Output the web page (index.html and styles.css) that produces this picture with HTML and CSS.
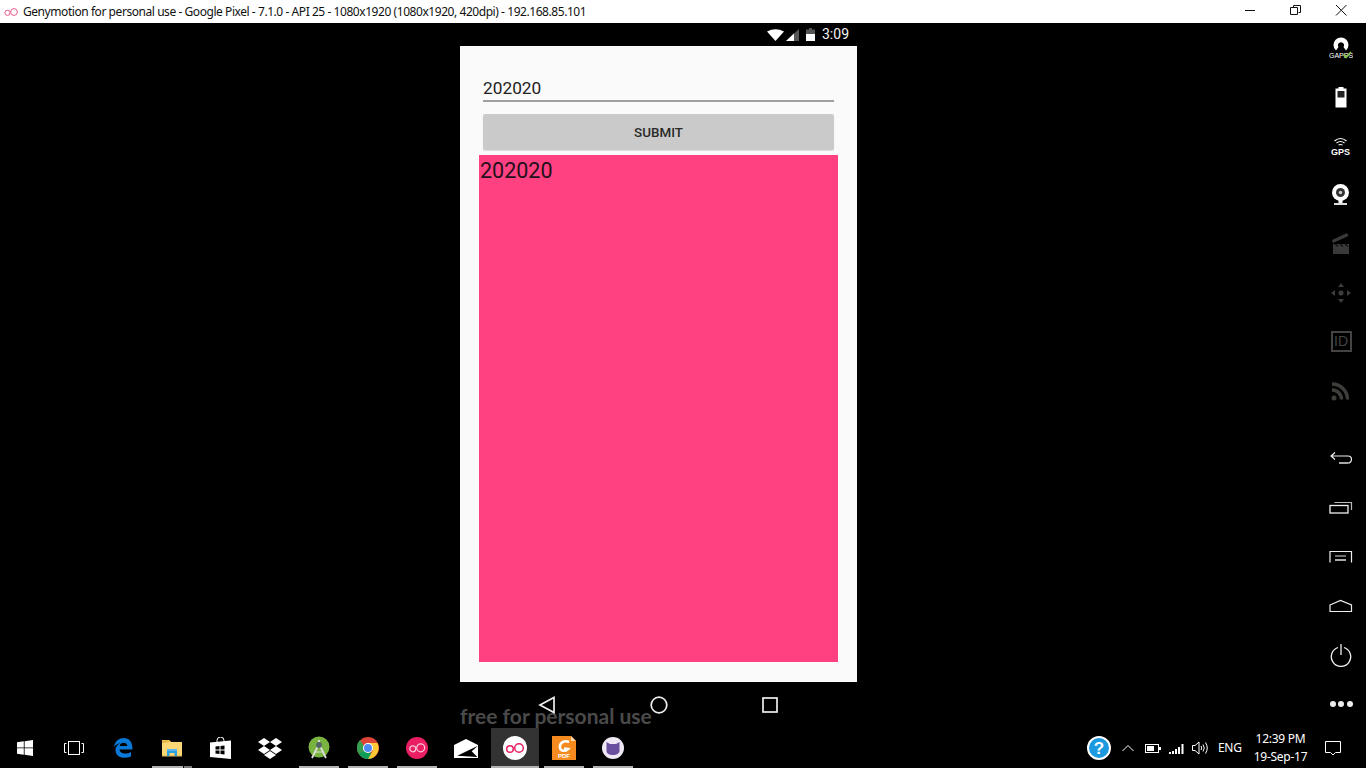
FILE: index.html
```html
<!DOCTYPE html>
<html lang="en">
<head>
<meta charset="utf-8">
<title>Genymotion</title>
<link rel="stylesheet" href="styles.css">
</head>
<body>
<div class="screen">
  <header class="titlebar">
    <svg class="title-logo" width="16" height="10" viewBox="0 0 16 10"><circle cx="4.500" cy="5.800" r="2.600" fill="none" stroke="#ef5a8c" stroke-width="1"/><circle cx="11" cy="5" r="3.400" fill="none" stroke="#ef5a8c" stroke-width="1"/></svg>
    <span class="title-text">Genymotion for personal use - Google Pixel - 7.1.0 - API 25 - 1080x1920 (1080x1920, 420dpi) - 192.168.85.101</span>
    <div class="win-controls">
      <svg width="46" height="23" viewBox="0 0 46 23"><path d="M19 10.500h10" stroke="#111" fill="none"/></svg>
      <svg width="46" height="23" viewBox="0 0 46 23"><path d="M21.500 7.500v-2h7v7h-2M18.500 7.500h7v7h-7z" stroke="#111" fill="none"/></svg>
      <svg width="46" height="23" viewBox="0 0 46 23"><path d="M18 5l10.500 10.500M28.500 5L18 15.500" stroke="#111" fill="none"/></svg>
    </div>
  </header>

  <main class="stage">
    <section class="device">
      <div class="statusbar">
        <svg width="17" height="12" viewBox="0 0 17 12"><path d="M0 2.500Q8.500 -2 17 2.500L8.500 12z" fill="#fff"/></svg>
        <svg class="st-signal" width="13" height="12" viewBox="0 0 13 12"><path d="M0 12L13 0v12z" fill="#555"/><path d="M0 12L8 4.600V12z" fill="#fff"/></svg>
        <svg class="st-batt" width="9" height="13" viewBox="0 0 9 13"><path d="M3 0h3v1.500h3V13H0V1.500h3z" fill="#555"/><path d="M0 6h9v7H0z" fill="#fff"/></svg>
        <span class="st-time">3:09</span>
      </div>
      <div class="app">
        <div class="field">202020</div>
        <button class="submit" type="button">SUBMIT</button>
        <div class="pink">202020</div>
      </div>
      <nav class="softkeys">
        <svg width="18" height="18" viewBox="0 0 18 18"><path d="M16 1.500v15L2 9z" fill="none" stroke="#eee" stroke-width="1.700"/></svg>
        <svg width="18" height="18" viewBox="0 0 18 18"><circle cx="9" cy="9" r="7.800" fill="none" stroke="#eee" stroke-width="1.700"/></svg>
        <svg width="16" height="16" viewBox="0 0 16 16"><rect x="1" y="1" width="14" height="14" fill="none" stroke="#eee" stroke-width="1.700"/></svg>
      </nav>
      <div class="watermark">free for personal use</div>
    </section>

    <aside class="sidebar">
      <div class="side-item"><svg width="24" height="24" viewBox="0 0 24 24"><path d="M7 14.500A7.500 7.500 0 1 1 17 14.500L14.500 11A3 3 0 1 0 9.500 11z" fill="#fff"/><text x="0" y="22" class="gapps">GAPPS</text><path d="M14.500 18.500l2.500 3 5-5.500" fill="none" stroke="#8bc34a" stroke-width="1.800"/></svg></div>
      <div class="side-item"><svg width="14" height="22" viewBox="0 0 14 22"><path d="M4.500 1h5v1.500h3V21.500H1.500V2.500h3z" fill="#fff"/><rect x="3.500" y="5" width="7" height="6.500" fill="#222"/></svg></div>
      <div class="side-item"><svg width="20" height="20" viewBox="0 0 20 20"><path d="M3.500 5Q9.500 0 15.500 5M5.500 7Q9.500 4 13.500 7M7.500 9Q9.500 8 11.500 9" fill="none" stroke="#fff" stroke-width="1.200"/><text x="9.500" y="18.500" class="gps">GPS</text></svg></div>
      <div class="side-item"><svg width="20" height="24" viewBox="0 0 20 24"><circle cx="9.500" cy="9.500" r="8.500" fill="#fff"/><circle cx="9.500" cy="9.500" r="4.500" fill="#333"/><circle cx="9.500" cy="9.500" r="1.700" fill="#ccc"/><rect x="7.500" y="17" width="4" height="3" fill="#fff"/><rect x="3" y="20" width="13" height="2" fill="#ddd"/></svg></div>
      <div class="side-item"><svg width="18" height="22" viewBox="0 0 18 22"><path d="M1 11h16v10H1z" fill="#3a3a3a"/><path d="M0 7L15 0l1.500 3L1 10z" fill="#3a3a3a"/><path d="M3 11l3 2.500M8 11l3 2.500M13 11l3 2.500" stroke="#111" stroke-width="1.400"/></svg></div>
      <div class="side-item"><svg width="22" height="22" viewBox="0 0 22 22" fill="#3d3d3d"><path d="M11 1l3 4H8zM11 21l-3-4h6zM1 11l4-3v6zM21 11l-4 3V8z"/><circle cx="11" cy="11" r="2.500"/></svg></div>
      <div class="side-item"><div class="id-box">ID</div></div>
      <div class="side-item"><svg width="20" height="20" viewBox="0 0 20 20"><path d="M1 9a9.500 9.500 0 0 1 9.500 9.500M1 3a15.500 15.500 0 0 1 15.500 15.500" fill="none" stroke="#3e3e3a" stroke-width="3.400"/><circle cx="3" cy="17" r="2.500" fill="#3e3e3a"/></svg></div>
      <div class="side-gap"></div>
      <div class="side-item"><svg width="24" height="14" viewBox="0 0 24 14"><path d="M6 .500L2 4l4 3.500M2 4H19a3.500 3.500 0 0 1 0 7" fill="none" stroke="#eee" stroke-width="1.200"/><path d="M10 11H19" stroke="#bbb" stroke-width="1.800" fill="none"/></svg></div>
      <div class="side-item"><svg width="24" height="14" viewBox="0 0 24 14"><path d="M5.500 1.500H22.500V9" fill="none" stroke="#bbb" stroke-width="1.200"/><rect x="1" y="4.500" width="18" height="7.500" fill="none" stroke="#eee" stroke-width="1.300"/></svg></div>
      <div class="side-item"><svg width="24" height="14" viewBox="0 0 24 14"><path d="M1 12.500V1.500h21.500v11" fill="none" stroke="#eee" stroke-width="1.200"/><path d="M6 6h11" stroke="#ddd" stroke-width="1"/><path d="M6 10h11" stroke="#aaa" stroke-width="2"/></svg></div>
      <div class="side-item"><svg width="24" height="14" viewBox="0 0 24 14"><path d="M1 6L11.500 1.500 22.500 6v6.500H1z" fill="none" stroke="#eee" stroke-width="1.200"/></svg></div>
      <div class="side-item"><svg width="22" height="24" viewBox="0 0 22 24"><path d="M8 4.500a9.700 9.700 0 1 0 6 0" fill="none" stroke="#eee" stroke-width="1.300"/><path d="M11 1v11" stroke="#eee" stroke-width="1.300"/></svg></div>
      <div class="side-item"><div class="dots"><i></i><i></i><i></i></div></div>
    </aside>
  </main>

  <footer class="taskbar">
    <div class="tb-item"><svg width="16" height="16" viewBox="0 0 16 16" fill="#fff"><path d="M0 2.300L6.800 1.300V7.500H0zM7.600 1.200L16 0V7.500H7.600zM0 8.300H6.800V14.700L0 13.700zM7.600 8.300H16V16L7.600 14.800z"/></svg></div>
    <div class="tb-item"><svg width="20" height="14" viewBox="0 0 20 14" fill="none" stroke="#fff" stroke-width="1"><rect x="4.500" y=".500" width="11" height="13"/><path d="M2.500 2.500H.500v9h2M17.500 2.500h2v9h-2"/></svg></div>
    <div class="tb-item"><svg width="20" height="20" viewBox="0 0 20 20"><path d="M1 9C2 3 6 0 11 0c5 0 8.500 3.500 8.500 11.500H6.500c.3 4 6 5.500 11.500 2.500v4.500c-7 3-15.500 1-15.500-6.500C2.500 9 4.500 6.500 7.500 5 5 5.500 2.500 7 1 9zM6.700 8h7.600c0-4-7-4.500-7.600 0z" fill="#0a78d7"/></svg></div>
    <div class="tb-item open-split"><svg width="22" height="18" viewBox="0 0 22 18"><path d="M1 1h7l2 2h11v14H1z" fill="#fbd775"/><path d="M1 1h7l2 2H7L5 4H1z" fill="#e9b949"/><path d="M1 16h20v1.500H1z" fill="#e8c060"/><path d="M6 11h10v6h-2.500v-3h-5v3H6z" fill="#2d9fe0"/><path d="M6 10h10v2H6z" fill="#58b6ec"/></svg></div>
    <div class="tb-item"><svg width="21" height="22" viewBox="0 0 21 22"><path d="M7 5V3.500a3.500 3.500 0 0 1 7 0V5" fill="none" stroke="#fff" stroke-width="1"/><path d="M0 5.500L21 3.500V22L0 20z" fill="#fff"/><path d="M5.500 9.500l4-.4v3.400h-4zM10.500 9l4-.4v3.900h-4zM5.500 13.500h4v3.400l-4-.4zM10.500 13.500h4v3.900l-4-.4z" fill="#000"/></svg></div>
    <div class="tb-item"><svg width="24" height="21" viewBox="0 0 24 21" fill="#fff"><path d="M6 0l6 4-6 4-6-4zM18 0l6 4-6 4-6-4zM6 8l6 4-6 4-6-4zM18 8l6 4-6 4-6-4zM6 17l6-4 6 4-6 4z"/></svg></div>
    <div class="tb-item open"><svg width="22" height="24" viewBox="0 0 22 24"><circle cx="11" cy="11" r="10.500" fill="#79b340"/><path d="M11 4v2M4 22L11 8l7 14" fill="none" stroke="#ddd" stroke-width="1.800"/><circle cx="11" cy="9" r="3" fill="#566"/><path d="M6 16h10" stroke="#ddd"/></svg></div>
    <div class="tb-item open"><svg width="22" height="22" viewBox="0 0 22 22"><circle cx="11" cy="11" r="11" fill="#db4437"/><path d="M11 11L1.500 16.500A11 11 0 0 0 11 22c3 0 4-.6 5-1.500z" fill="#0f9d58"/><path d="M11 6h9.500a11 11 0 0 1-9.500 16l5-8.500z" fill="#fcc934"/><path d="M11 11L1.500 16.500A11 11 0 0 1 3 3l4.500 7z" fill="#34a04f"/><circle cx="11" cy="11" r="5" fill="#fff"/><circle cx="11" cy="11" r="4" fill="#4c8bf5"/></svg></div>
    <div class="tb-item open"><svg width="22" height="22" viewBox="0 0 22 22"><circle cx="11" cy="11" r="11" fill="#e91e63"/><circle cx="6.800" cy="11.800" r="3" fill="none" stroke="#f8c8d8" stroke-width="1.200"/><circle cx="14.700" cy="10.800" r="4" fill="none" stroke="#f8c8d8" stroke-width="1.200"/></svg></div>
    <div class="tb-item"><svg width="24" height="19" viewBox="0 0 24 19"><path d="M0 6L12 0l12 6v13H0z" fill="#fff"/><path d="M3.300 16.700L24 6.700l-6.300 5.600 5.600 5.700z" fill="#000"/></svg></div>
    <div class="tb-item active"><svg width="24" height="24" viewBox="0 0 24 24"><circle cx="12" cy="12" r="12" fill="#fff"/><circle cx="7" cy="13" r="3.300" fill="none" stroke="#e91e63" stroke-width="1.500"/><circle cx="16" cy="12" r="4.300" fill="none" stroke="#e91e63" stroke-width="1.500"/></svg></div>
    <div class="tb-item open"><svg width="24" height="24" viewBox="0 0 24 24"><path d="M0 0h19l5 5v19H0z" fill="#f58a1f"/><path d="M19 0l5 5h-5z" fill="#fbd9a8"/><path d="M17 6c-5-2-10 1-9 6 .5 3 5 4 8 1l-4-.5" fill="none" stroke="#fff" stroke-width="2.500"/><text x="12" y="22" class="pdf">PDF</text></svg></div>
    <div class="tb-item open"><svg width="22" height="22" viewBox="0 0 22 22"><circle cx="11" cy="11" r="11" fill="#eee9f5"/><path d="M4.500 5l3.500 2h6l3.500-2v9c0 2.500-3 4-6.500 4s-6.500-1.500-6.500-4z" fill="#6a4fa0"/></svg></div>
    <div class="tray">
      <svg width="24" height="24" viewBox="0 0 24 24"><circle cx="12" cy="12" r="11" fill="#1b9ae0" stroke="#fff" stroke-width="2"/><text x="12" y="18" class="help-q">?</text></svg>
      <svg class="t-chev" width="12" height="8" viewBox="0 0 12 8"><path d="M.500 7L6 1.500 11.500 7" fill="none" stroke="#fff"/></svg>
      <svg class="t-batt" width="16" height="9" viewBox="0 0 16 9"><rect x=".500" y=".500" width="13" height="8" fill="none" stroke="#fff"/><rect x="2" y="2" width="7" height="5" fill="#fff"/><rect x="14" y="3" width="2" height="3" fill="#fff"/></svg>
      <svg class="t-signal" width="15" height="11" viewBox="0 0 15 11" fill="#fff"><path d="M0 9h2v2H0zM3 8h2v3H3zM6 6h2v5H6zM9 4h2v7H9zM12.500 1h2v10h-2z"/></svg>
      <svg class="t-vol" width="17" height="14" viewBox="0 0 17 14" fill="none" stroke="#fff" stroke-width="1"><path d="M.500 4.500h2.500l4-3.500v12l-4-3.500H.500zM9 5q1.500 2 0 4M11 3.500q2.500 3.500 0 7M13.500 1.500q3.500 5.500 0 11"/></svg>
      <span class="t-lang">ENG</span>
      <div class="t-clock"><span>12:39 PM</span><span>19-Sep-17</span></div>
      <svg class="t-note" width="16" height="16" viewBox="0 0 16 16"><path d="M.500 1.500h15v11h-5l-2.500 2.500-2.500-2.500h-5z" fill="none" stroke="#fff"/></svg>
    </div>
  </footer>
</div>
</body>
</html>
```
FILE: styles.css
```css
* { box-sizing: border-box; }
html, body { margin: 0; padding: 0; background: #000; }
.screen { width: 1366px; height: 768px; display: flex; flex-direction: column; overflow: hidden; position: relative; }

.titlebar { height: 23px; background: #fff; display: flex; align-items: center; flex: none; }
.title-logo { margin-left: 3px; flex: none; }
.title-text { margin-left: 4px; font: 12px/23px "Noto Sans", sans-serif; letter-spacing: -0.44px; color: #111; white-space: nowrap; }
.win-controls { margin-left: auto; display: flex; margin-right: 2px; }

.stage { flex: 1; display: flex; background: #000; min-height: 0; }
.device { width: 397px; margin-left: 460px; display: flex; flex-direction: column; position: relative; }
.statusbar { height: 23px; display: flex; align-items: center; justify-content: flex-end; padding-right: 8px; }
.st-signal { margin-left: 2px; }
.st-batt { margin-left: 7px; }
.st-time { margin-left: 7px; font: 400 14px/25px Roboto, sans-serif; color: #f4f4f4; }

.app { height: 636px; background: #fafafa; padding-top: 29px; display: flex; flex-direction: column; }
.field { margin: 0 23px; height: 27px; padding-top: 1px; border-bottom: 2px solid #a0a0a0; font: 17.300px/24px Roboto, sans-serif; color: #222; }
.submit { margin: 12px 23px 0; height: 36px; border: 0; border-radius: 2px; background: #c9cac9; font: 500 13.400px/36px Roboto, sans-serif; color: #2a2a2a; padding: 1px 0 0; box-shadow: 0 1px 1px rgba(0,0,0,.12); }
.pink { margin: 5px 19px 0 19px; height: 507px; background: #ff4081; font: 21.500px/30px Roboto, sans-serif; color: #22101a; padding: 1px 0 0 1px; }

.softkeys { height: 46px; display: flex; align-items: flex-start; padding: 14px 79px 0 78px; justify-content: space-between; position: relative; z-index: 1; }
.softkeys svg:nth-child(3) { margin-top: 1px; }
.watermark { position: absolute; left: 0; top: 679px; font: 700 21px/28px Lato, sans-serif; color: #4a4a4a; white-space: nowrap; }

.sidebar { width: 50px; margin-left: auto; display: flex; flex-direction: column; }
.side-item { height: 49px; flex: none; display: flex; align-items: center; justify-content: center; }
.side-gap { height: 19px; flex: none; }
.gapps { font: 400 7px "Liberation Sans", sans-serif; fill: #fff; }
.gps { font: 700 9px "Liberation Sans", sans-serif; fill: #fff; text-anchor: middle; }
.id-box { width: 21px; height: 21px; border: 2px solid #444; color: #444; font: 14px/17px "Liberation Sans", sans-serif; text-align: center; }
.dots { display: flex; gap: 2.500px; }
.dots i { width: 6px; height: 6px; background: #eee; border-radius: 50%; display: block; }

.taskbar { height: 40px; flex: none; background: #000; display: flex; align-items: stretch; }
.tb-item { width: 49px; flex: none; display: flex; align-items: center; justify-content: center; position: relative; }
.tb-item.open::after { content: ""; position: absolute; left: 5px; right: 4px; bottom: 0; height: 2px; background: #b3b3b3; }
.tb-item.open-split::after { content: ""; position: absolute; left: 5px; width: 31px; bottom: 0; height: 2px; background: #b3b3b3; }
.tb-item.open-split::before { content: ""; position: absolute; left: 37px; width: 8px; bottom: 0; height: 2px; background: #7a7a7a; }
.tb-item.active { background: #333; width: 48px; margin-left: 1px; }
.tb-item.active::after { content: ""; position: absolute; left: 0; right: 0; bottom: 0; height: 2px; background: #b3b3b3; }
.pdf { font: 700 6px "Liberation Sans", sans-serif; fill: #fff; text-anchor: middle; }
.help-q { font: 700 17px "Liberation Sans", sans-serif; fill: #fff; text-anchor: middle; }

.tray { margin-left: auto; display: flex; align-items: center; color: #fff; padding-right: 25px; }
.t-chev { margin-left: 11px; }
.t-batt { margin-left: 11px; }
.t-signal { margin-left: 8px; }
.t-vol { margin-left: 8px; }
.t-lang { margin-left: 9px; width: 23px; font: 12px/16px "Noto Sans", sans-serif; letter-spacing: -0.3px; white-space: nowrap; }
.t-clock { margin-left: 13px; width: 53px; display: flex; flex-direction: column; align-items: center; font: 12px/18px "Noto Sans", sans-serif; letter-spacing: -0.25px; white-space: nowrap; }
.t-note { margin-left: 18px; }
```
